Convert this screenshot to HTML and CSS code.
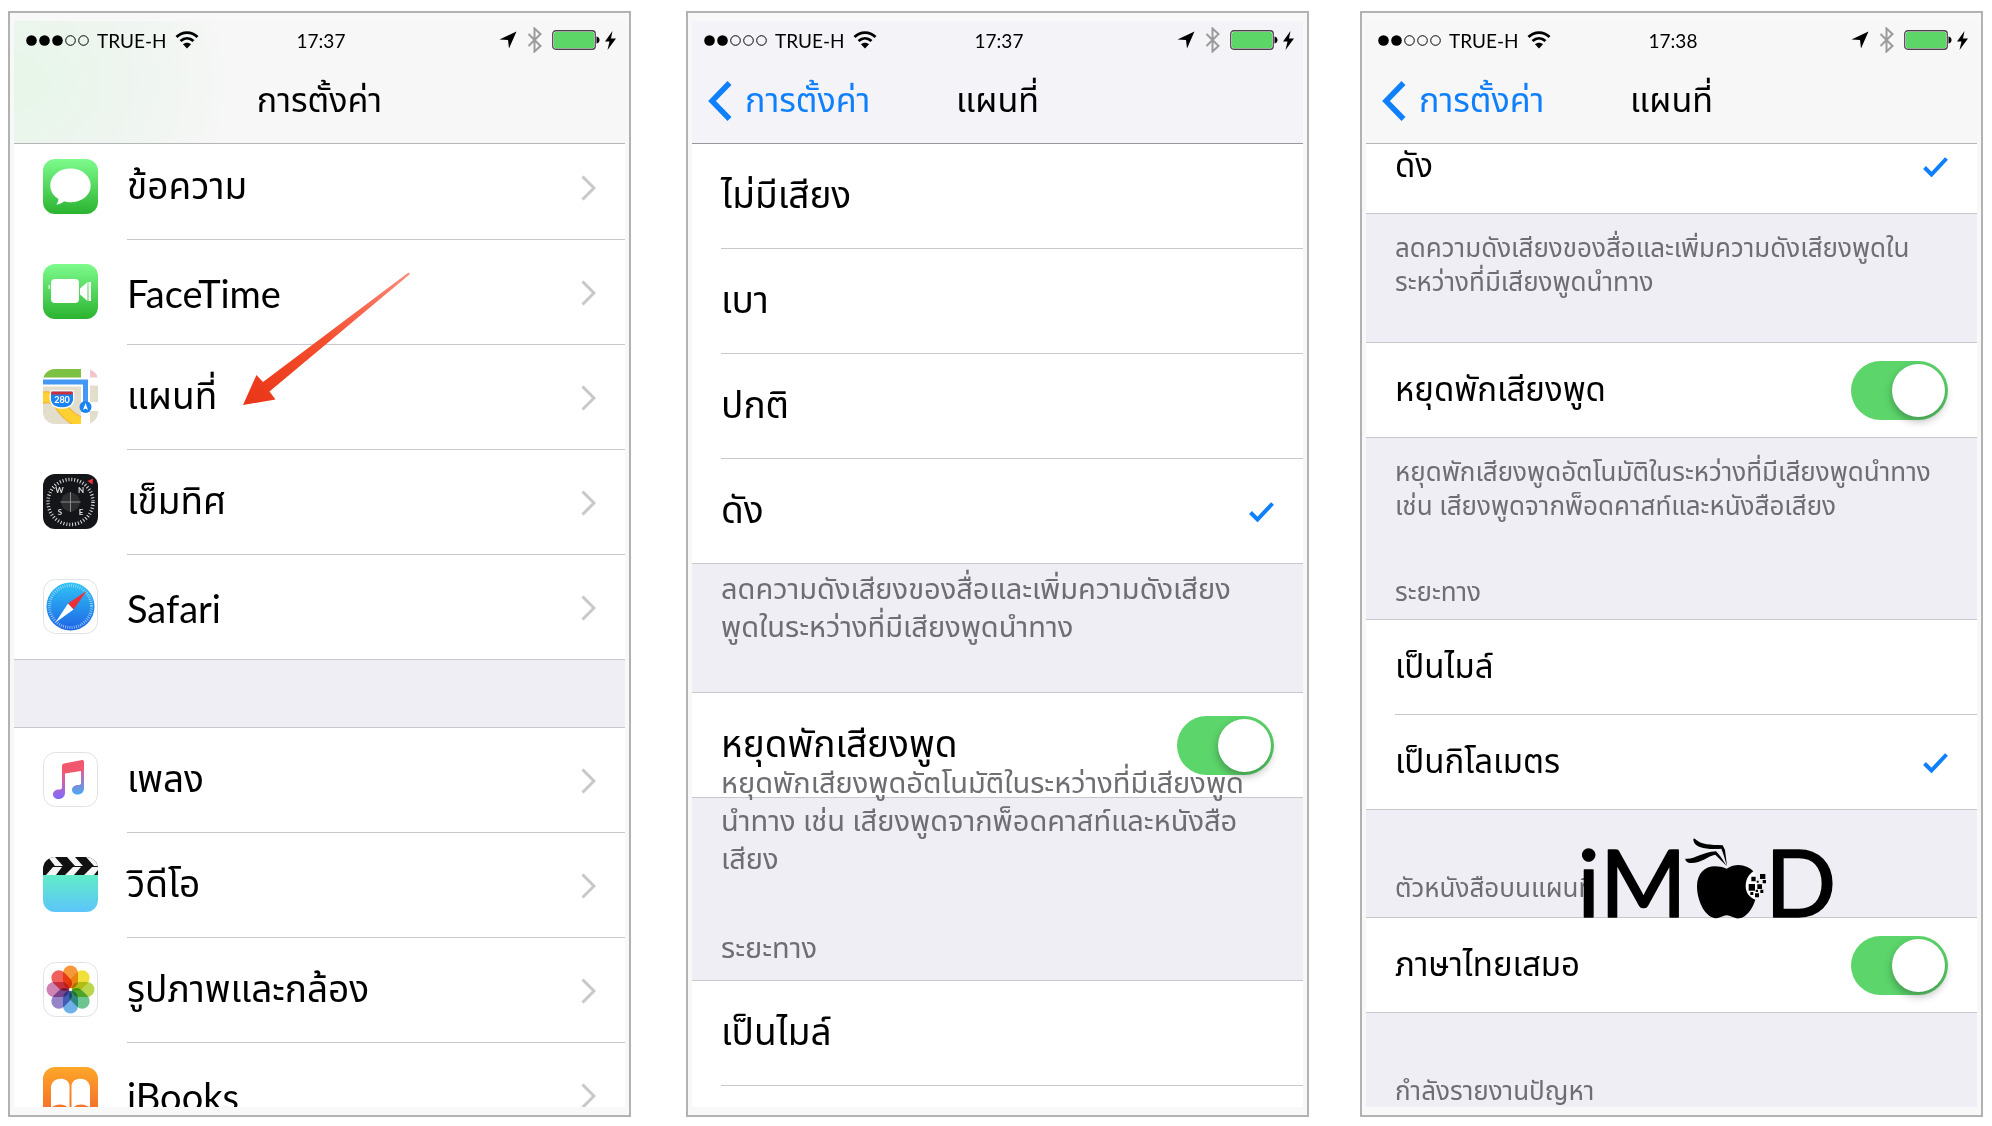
FILE: index.html
```html
<!DOCTYPE html>
<html lang="th">
<head>
    <meta charset="UTF-8">
    <meta name="viewport" content="width=device-width, initial-scale=1.0">
    <title>การตั้งค่า - แผนที่</title>
    <link rel="stylesheet" href="styles.css">
</head>
<body>
    <!-- shared symbols and gradients -->
    <svg class="defs" aria-hidden="true">
        <defs>
            <linearGradient id="green" x1="0" y1="0" x2="0" y2="1"><stop offset="0" stop-color="#7dfb8c"/><stop offset="1" stop-color="#2bb330"/></linearGradient>
            <linearGradient id="blue" x1="0" y1="0" x2="0" y2="1"><stop offset="0" stop-color="#2fc4f5"/><stop offset="1" stop-color="#1e63e6"/></linearGradient>
            <linearGradient id="note" x1="0" y1="0" x2="0" y2="1"><stop offset="0" stop-color="#f4566e"/><stop offset=".35" stop-color="#e0609a"/><stop offset="1" stop-color="#7a6cff"/></linearGradient>
            <linearGradient id="note2" x1="0" y1="0" x2="0" y2="1"><stop offset="0" stop-color="#f4566e"/><stop offset=".4" stop-color="#c16cae"/><stop offset="1" stop-color="#43aaf8"/></linearGradient>
            <linearGradient id="video" x1="0" y1="0" x2="0" y2="1"><stop offset="0" stop-color="#62ecc8"/><stop offset="1" stop-color="#5cc5fa"/></linearGradient>
            <linearGradient id="orange" x1="0" y1="0" x2="0" y2="1"><stop offset="0" stop-color="#fda729"/><stop offset="1" stop-color="#f4602a"/></linearGradient>
            <linearGradient id="red" x1="1" y1="0" x2="0" y2="1"><stop offset="0" stop-color="#fb8a7c"/><stop offset=".5" stop-color="#f3502f"/><stop offset="1" stop-color="#ea3517"/></linearGradient>
            <clipPath id="tile"><rect width="55" height="55" rx="12"/></clipPath>
        </defs>
        <symbol id="dot-on" viewBox="0 0 11 11"><circle cx="5.5" cy="5.5" r="5.3"/></symbol>
        <symbol id="dot-off" viewBox="0 0 11 11"><circle cx="5.5" cy="5.5" r="4.8" fill="none" stroke="#000"/></symbol>
        <symbol id="wifi" viewBox="0 0 24 18">
            <path d="M1.5 6C7.5 .2 16.5 .2 22.5 6M5.5 10c4-3.6 9-3.6 13 0" fill="none" stroke="#000" stroke-width="2.8"/>
            <path d="M12 17.5l-4-4.3c2.4-2 5.6-2 8 0z"/>
        </symbol>
        <symbol id="location" viewBox="0 0 18 18"><path d="M17.5 .5L10 17.5 9 9 .5 8.5z"/></symbol>
        <symbol id="bluetooth" viewBox="0 0 15 26"><path d="M1.5 7l12 12-6 5.500v-23l6 5.5-12 12" fill="none" stroke="#9b9b9b" stroke-width="2"/></symbol>
        <symbol id="battery" viewBox="0 0 48 20">
            <rect x=".75" y=".75" width="42.5" height="18.5" rx="3" fill="#fff" stroke="#444" stroke-width="1.3"/>
            <rect x="2" y="2" width="40" height="16" rx="1.5" fill="#5cd667"/>
            <path d="M44.500 6.500c4 .5 4 6.500 0 7z"/>
        </symbol>
        <symbol id="bolt" viewBox="0 0 11 19"><path d="M7.5 0L0 10.5h4.5L2.5 19 11 7.5H6z"/></symbol>
        <symbol id="chevron" viewBox="0 0 15 26"><path d="M1.5 1.5L13 13 1.5 24.5" fill="none" stroke="#c7c7cc" stroke-width="3"/></symbol>
        <symbol id="back" viewBox="0 0 24 40"><path d="M21.5 2L4 20l17.5 18" fill="none" stroke="#0f7ffb" stroke-width="5.5"/></symbol>
        <symbol id="check" viewBox="0 0 25 20"><path d="M1.5 10.5l7 7L23.5 1.5" fill="none" stroke="#0f7ffb" stroke-width="4"/></symbol>
    </svg>

    <main class="phones">
        <section class="phone phone-settings">
            <div class="screen">
                <header class="header">
                    <div class="status">
                        <div class="carrier">
                            <span class="dots"><svg><use href="#dot-on"/></svg><svg><use href="#dot-on"/></svg><svg><use href="#dot-on"/></svg><svg><use href="#dot-off"/></svg><svg><use href="#dot-off"/></svg></span>
                            <span>TRUE-H</span>
                            <svg class="wifi"><use href="#wifi"/></svg>
                        </div>
                        <time>17:37</time>
                        <div class="power">
                            <svg class="location"><use href="#location"/></svg>
                            <svg class="bluetooth"><use href="#bluetooth"/></svg>
                            <svg class="battery"><use href="#battery"/></svg>
                            <svg class="bolt"><use href="#bolt"/></svg>
                        </div>
                    </div>
                    <div class="nav"><h1>การตั้งค่า</h1></div>
                </header>

                <nav class="group">
                    <a class="row" href="#messages">
                        <svg class="icon" viewBox="0 0 55 55">
                            <rect width="55" height="55" rx="12" fill="url(#green)"/>
                            <path d="M27.5 9.5C16 9.5 7.3 17 7.3 26.5c0 6 3.3 10.5 8.2 13.5-.2 2-1 4-2.3 5.5 3.5-.2 5.6-1.3 7.5-3 2 .6 4.5.8 6.8.8C39 43.3 47.7 36 47.7 26.5S39 9.5 27.5 9.5z" fill="#fff"/>
                        </svg>
                        <span class="label">ข้อความ</span>
                        <svg class="chevron"><use href="#chevron"/></svg>
                    </a>
                    <a class="row" href="#facetime">
                        <svg class="icon" viewBox="0 0 55 55">
                            <rect width="55" height="55" rx="12" fill="url(#green)"/>
                            <rect x="8" y="15" width="28" height="24" rx="4" fill="#fff"/>
                            <path d="M37 27.5v-3L44.5 18v19L37 30.5z M45.5 18h2.5v19h-2.5z" fill="#fff"/>
                            <rect x="5.5" y="21" width="1.5" height="4" fill="#d6f7d6"/>
                        </svg>
                        <span class="label latin">FaceTime</span>
                        <svg class="chevron"><use href="#chevron"/></svg>
                    </a>
                    <a class="row" href="#maps">
                        <svg class="icon" viewBox="0 0 55 55">
                            <g clip-path="url(#tile)">
                                <rect width="55" height="55" fill="#e3ddcb"/>
                                <rect width="38" height="9" fill="#7cc142"/>
                                <rect y="8.5" width="45" height="9" fill="#fff"/>
                                <path d="M-2 29C10 26 14 31 20 40c6 8 12 11 22 16" fill="none" stroke="#f2ab35" stroke-width="12"/>
                                <path d="M-2 29C10 26 14 31 20 40c6 8 12 11 22 16" fill="none" stroke="#fdd131" stroke-width="10"/>
                                <rect x="38" width="9" height="55" fill="#fff"/>
                                <rect x="47" width="8" height="8.5" fill="#f6c4cf"/>
                                <rect x="47" y="8.5" width="8" height="8" fill="#fff"/>
                                <rect x="45" y="33" width="10" height="9" fill="#fff"/>
                                <path d="M46 56l9-5v5z" fill="#fdd131"/>
                                <path d="M0 13h42.5v25" fill="none" stroke="#4498f4" stroke-width="5"/>
                                <path d="M8 22h22c2 9 1 17-11 17S6 31 8 22z" fill="#1a83f2" stroke="#fff" stroke-width="1.3"/>
                                <path d="M8.5 22.500h21l.5 3H8z" fill="#c9303c"/>
                                <text x="19" y="34" class="icon-text" font-size="9" text-anchor="middle" fill="#fff">280</text>
                                <circle cx="42.5" cy="38" r="6" fill="#1a83f2"/>
                                <path d="M42.5 34l2.5 7-2.5-1.5L40 41z" fill="#fff"/>
                            </g>
                        </svg>
                        <span class="label">แผนที่</span>
                        <svg class="chevron"><use href="#chevron"/></svg>
                        <svg class="arrow" viewBox="0 0 170 136" aria-hidden="true">
                            <path d="M1 134L14.5 104l6.500 7L166.5 1.5 168 3 27.5 120.5l6 8z" fill="url(#red)"/>
                        </svg>
                    </a>
                    <a class="row" href="#compass">
                        <svg class="icon" viewBox="0 0 55 55">
                            <rect width="55" height="55" rx="12" fill="#141518"/>
                            <circle cx="27.5" cy="28" r="22.5" fill="none" stroke="#ddd" stroke-width="3.5" stroke-dasharray="1 1.95"/>
                            <circle cx="27.5" cy="28" r="9.5" fill="#2d2e30"/>
                            <path d="M27.5 18v20M17.5 28h20" stroke="#8b8b8b"/>
                            <path d="M50 4.5l-.5 6-5-3.5z" fill="#f0323c"/>
                            <g class="icon-text" font-size="8" fill="#ddd" text-anchor="middle"><text x="16.5" y="19">W</text><text x="38" y="19">N</text><text x="17" y="41">S</text><text x="38" y="41">E</text></g>
                        </svg>
                        <span class="label">เข็มทิศ</span>
                        <svg class="chevron"><use href="#chevron"/></svg>
                    </a>
                    <a class="row" href="#safari">
                        <svg class="icon" viewBox="0 0 55 55">
                            <rect x=".5" y=".5" width="54" height="54" rx="12" fill="#fff" stroke="#dfe3e6"/>
                            <circle cx="27.5" cy="27.5" r="24" fill="url(#blue)"/>
                            <circle cx="27.5" cy="27.5" r="21" fill="none" stroke="#a9dcfb" stroke-width="3" stroke-dasharray=".7 1.5"/>
                            <path d="M43.5 12L25 24.5l5.5 6z" fill="#ec2f38"/>
                            <path d="M12.5 43.5L25 24.5l5.5 6z" fill="#fff"/>
                        </svg>
                        <span class="label latin">Safari</span>
                        <svg class="chevron"><use href="#chevron"/></svg>
                    </a>
                </nav>

                <nav class="group">
                    <a class="row" href="#music">
                        <svg class="icon" viewBox="0 0 55 55">
                            <rect x=".5" y=".5" width="54" height="54" rx="12" fill="#fff" stroke="#e2e2e4"/>
                            <path d="M19 13v27.500c0 8-9 7.500-9 2 0-4.500 4.500-5 8.500-5.500H22V20z" fill="none"/>
                            <path d="M19 13h3v27.5c0 4-2.500 6.500-6.500 6.500-3 0-5.500-2-5.500-4.500 0-3.500 3-5 6-5 1.800 0 3-.5 3-2z" fill="url(#note)"/>
                            <path d="M38 9h3v27c0 4-2.500 6.500-6.500 6.500-3 0-5.500-2-5.500-4.500 0-3.500 3-5 6-5 1.800 0 3-.5 3-2z" fill="url(#note2)"/>
                            <path d="M19 14q0-2 2-2.400l18-3.600q2-.3 2 1.500v9L19 22z" fill="#f15870"/>
                        </svg>
                        <span class="label">เพลง</span>
                        <svg class="chevron"><use href="#chevron"/></svg>
                    </a>
                    <a class="row" href="#videos">
                        <svg class="icon" viewBox="0 0 55 55">
                            <g clip-path="url(#tile)">
                                <rect width="55" height="18" fill="#111"/>
                                <path d="M0 0h5L0 7zM5 0h7l8 9h-8zM24 0h8l8 9h-8zM43 0h12v9h-4zM3 18l7-8h9l-6 8zM22 18l8-8h8l-7 8zM41 18l8-8h6v3l-4 5z" fill="#f5f5f5"/>
                                <rect y="18" width="55" height="37" fill="url(#video)"/>
                            </g>
                        </svg>
                        <span class="label">วิดีโอ</span>
                        <svg class="chevron"><use href="#chevron"/></svg>
                    </a>
                    <a class="row" href="#photos">
                        <svg class="icon" viewBox="0 0 55 55">
                            <rect x=".5" y=".5" width="54" height="54" rx="12" fill="#fff" stroke="#e2e2e4"/>
                            <g class="petals">
                                <rect x="20" y="3.5" width="15" height="23" rx="7.5" fill="#f7983a"/>
                                <rect x="20" y="3.5" width="15" height="23" rx="7.5" fill="#f1e03a" transform="rotate(45 27.5 27.5)"/>
                                <rect x="20" y="3.5" width="15" height="23" rx="7.5" fill="#b9d64c" transform="rotate(90 27.5 27.5)"/>
                                <rect x="20" y="3.5" width="15" height="23" rx="7.5" fill="#6cc48f" transform="rotate(135 27.5 27.5)"/>
                                <rect x="20" y="3.5" width="15" height="23" rx="7.5" fill="#6fb0e6" transform="rotate(180 27.5 27.5)"/>
                                <rect x="20" y="3.5" width="15" height="23" rx="7.5" fill="#9485c8" transform="rotate(225 27.5 27.5)"/>
                                <rect x="20" y="3.5" width="15" height="23" rx="7.5" fill="#cf82b4" transform="rotate(270 27.5 27.5)"/>
                                <rect x="20" y="3.5" width="15" height="23" rx="7.5" fill="#f0605a" transform="rotate(315 27.5 27.5)"/>
                            </g>
                            <circle cx="27.5" cy="27.5" r="1.5" fill="#fff"/>
                        </svg>
                        <span class="label">รูปภาพและกล้อง</span>
                        <svg class="chevron"><use href="#chevron"/></svg>
                    </a>
                    <a class="row" href="#ibooks">
                        <svg class="icon" viewBox="0 0 55 55">
                            <rect width="55" height="55" rx="12" fill="url(#orange)"/>
                            <path d="M8 21c0-12 18-12 18.500-2v24c-3-7-14-7-18.500-2zM47 21c0-12-18-12-18.500-2v24c3-7 14-7 18.500-2z" fill="#fff"/>
                        </svg>
                        <span class="label latin">iBooks</span>
                        <svg class="chevron"><use href="#chevron"/></svg>
                    </a>
                </nav>
            </div>
        </section>

        <section class="phone phone-maps">
            <div class="screen">
                <header class="header">
                    <div class="status">
                        <div class="carrier">
                            <span class="dots"><svg><use href="#dot-on"/></svg><svg><use href="#dot-on"/></svg><svg><use href="#dot-off"/></svg><svg><use href="#dot-off"/></svg><svg><use href="#dot-off"/></svg></span>
                            <span>TRUE-H</span>
                            <svg class="wifi"><use href="#wifi"/></svg>
                        </div>
                        <time>17:37</time>
                        <div class="power">
                            <svg class="location"><use href="#location"/></svg>
                            <svg class="bluetooth"><use href="#bluetooth"/></svg>
                            <svg class="battery"><use href="#battery"/></svg>
                            <svg class="bolt"><use href="#bolt"/></svg>
                        </div>
                    </div>
                    <div class="nav">
                        <a class="back" href="#settings"><svg><use href="#back"/></svg>การตั้งค่า</a>
                        <h1>แผนที่</h1>
                    </div>
                </header>

                <div class="group">
                    <label class="row"><input type="radio" name="volume"><span class="label">ไม่มีเสียง</span><svg class="check"><use href="#check"/></svg></label>
                    <label class="row"><input type="radio" name="volume"><span class="label">เบา</span><svg class="check"><use href="#check"/></svg></label>
                    <label class="row"><input type="radio" name="volume"><span class="label">ปกติ</span><svg class="check"><use href="#check"/></svg></label>
                    <label class="row"><input type="radio" name="volume" checked><span class="label">ดัง</span><svg class="check"><use href="#check"/></svg></label>
                </div>
                <p class="note">ลดความดังเสียงของสื่อและเพิ่มความดังเสียง<br>พูดในระหว่างที่มีเสียงพูดนำทาง</p>
                <div class="group">
                    <label class="row"><span class="label">หยุดพักเสียงพูด</span><input class="switch" type="checkbox" checked></label>
                </div>
                <p class="note note-pause">หยุดพักเสียงพูดอัตโนมัติในระหว่างที่มีเสียงพูด<br>นำทาง เช่น เสียงพูดจากพ็อดคาสท์และหนังสือ<br>เสียง</p>
                <h2>ระยะทาง</h2>
                <div class="group">
                    <label class="row"><input type="radio" name="unit"><span class="label">เป็นไมล์</span><svg class="check"><use href="#check"/></svg></label>
                </div>
            </div>
        </section>

        <section class="phone phone-compact">
            <div class="screen">
                <header class="header">
                    <div class="status">
                        <div class="carrier">
                            <span class="dots"><svg><use href="#dot-on"/></svg><svg><use href="#dot-on"/></svg><svg><use href="#dot-off"/></svg><svg><use href="#dot-off"/></svg><svg><use href="#dot-off"/></svg></span>
                            <span>TRUE-H</span>
                            <svg class="wifi"><use href="#wifi"/></svg>
                        </div>
                        <time>17:38</time>
                        <div class="power">
                            <svg class="location"><use href="#location"/></svg>
                            <svg class="bluetooth"><use href="#bluetooth"/></svg>
                            <svg class="battery"><use href="#battery"/></svg>
                            <svg class="bolt"><use href="#bolt"/></svg>
                        </div>
                    </div>
                    <div class="nav">
                        <a class="back" href="#settings"><svg><use href="#back"/></svg>การตั้งค่า</a>
                        <h1>แผนที่</h1>
                    </div>
                </header>

                <div class="group">
                    <label class="row"><input type="radio" name="volume2" checked><span class="label">ดัง</span><svg class="check"><use href="#check"/></svg></label>
                </div>
                <p class="note">ลดความดังเสียงของสื่อและเพิ่มความดังเสียงพูดใน<br>ระหว่างที่มีเสียงพูดนำทาง</p>
                <div class="group">
                    <label class="row"><span class="label">หยุดพักเสียงพูด</span><input class="switch" type="checkbox" checked></label>
                </div>
                <p class="note">หยุดพักเสียงพูดอัตโนมัติในระหว่างที่มีเสียงพูดนำทาง<br>เช่น เสียงพูดจากพ็อดคาสท์และหนังสือเสียง</p>
                <h2>ระยะทาง</h2>
                <div class="group">
                    <label class="row"><input type="radio" name="unit2"><span class="label">เป็นไมล์</span><svg class="check"><use href="#check"/></svg></label>
                    <label class="row"><input type="radio" name="unit2" checked><span class="label">เป็นกิโลเมตร</span><svg class="check"><use href="#check"/></svg></label>
                </div>
                <div class="map-labels">
                    <h2>ตัวหนังสือบนแผนที่</h2>
                    <svg class="imod" viewBox="36 24 756 276">
                        <g class="imod-text"><text x="56" y="262">i</text><text x="220" y="262">M</text><text x="692" y="262">D</text></g>
                        <path d="M552 128c-16 8-24 22-24 40s9 32 26 40q10-10 8-40t-10-40z" fill="#fff"/>
                        <path d="M470 116c30-18 60-12 80 8-14 10-23 24-23 44 0 20 11 34 29 41-8 26-26 53-48 56-16 2-26-9-38-9s-22 11-38 8c-30-8-51-54-51-96 1-50 39-72 89-52z"/>
                        <path d="M370 27c2-4 6 0 10 4 14 12 40 14 78 15l7 14 6 48c-6-18-9-34-17-52-30 3-84 2-84-29z"/>
                        <path d="M346 86c26 4 49-20 92-22 12 12 22 28 32 44l-34-34c-24 4-44 28-78 25-8-3-12-7-12-13z"/>
                        <path d="M544 140h13v14h-13zM570 132h16v15h-16zM536 162h19v20h-19zM562 163h14v14h-14zM578 150h10v10h-10zM560 152h6v6h-6zM541 186h9v9h-9zM557 179h7v7h-7zM571 179h9v10h-9zM555 190h12v12h-12z"/>
                    </svg>
                </div>
                <div class="group">
                    <label class="row"><span class="label">ภาษาไทยเสมอ</span><input class="switch" type="checkbox" checked></label>
                </div>
                <h2>กำลังรายงานปัญหา</h2>
            </div>
        </section>
    </main>
</body>
</html>
```

FILE: styles.css
```css
* {
    box-sizing: border-box;
}
body {
    margin: 0;
    background: #fff;
    font-family: Lato, "Noto Sans Thai", "Noto Sans", sans-serif;
    color: #000;
}
.defs {
    position: absolute;
    width: 0;
    height: 0;
}
.phones {
    display: grid;
    grid-template-columns: repeat(3, 1fr);
    gap: 53px;
    height: 100vh;
    padding: 11px 9px 9px 8px;
}
.phone {
    --row: 105px;
    --label: 37px;
    --note: 29px;
    --line: 38px;
    --bar: #f7f7f7;
    min-height: 0;
    padding: 8px 4px;
    border: 2px solid #b2b2b2;
    background: #f8f8f8;
}
.screen {
    height: 100%;
    overflow: hidden;
    background: #efeef4;
}

/* status bar and title */
.header {
    position: relative;
    z-index: 3;
    height: 123px;
    background: var(--bar);
    border-bottom: 1px solid #b6b6b9;
}
.status {
    display: grid;
    grid-template-columns: 1fr auto 1fr;
    align-items: center;
    height: 38px;
    padding: 0 9px 0 12px;
    font-size: 19px;
}
.carrier, .power, .dots {
    display: flex;
    align-items: center;
}
.carrier {
    gap: 8px;
}
.dots {
    gap: 2px;
}
.dots svg {
    width: 11px;
    height: 11px;
}
.wifi {
    width: 24px;
    height: 18px;
}
.power {
    justify-content: flex-end;
    gap: 10px;
}
.location {
    width: 18px;
    height: 18px;
}
.bluetooth {
    width: 15px;
    height: 26px;
}
.battery {
    width: 48px;
    height: 20px;
}
.bolt {
    width: 11px;
    height: 19px;
    margin-left: -5px;
}
.nav {
    display: grid;
    grid-template-columns: 1fr auto 1fr;
    align-items: center;
    height: 84px;
    padding: 0 16px;
}
.nav h1 {
    grid-column: 2;
    margin: 0;
    font-size: 34px;
    font-weight: 400;
}
.back {
    display: flex;
    align-items: center;
    gap: 13px;
    font-size: 34px;
    color: #0f7ffb;
    text-decoration: none;
}
.back svg {
    width: 24px;
    height: 40px;
}

/* list groups */
.group {
    border-top: 1px solid #c8c7cc;
    background: #fff;
}
.row {
    position: relative;
    display: flex;
    align-items: center;
    height: var(--row);
    padding: 0 29px;
    color: #000;
    text-decoration: none;
}
.row::after {
    content: "";
    position: absolute;
    left: 29px;
    right: 0;
    bottom: 0;
    border-bottom: 1px solid #c8c7cc;
}
.row:last-child::after {
    left: 0;
}
.label {
    flex: 1;
    font-size: var(--label);
    white-space: nowrap;
}
.latin {
    font-size: 38px;
}
.icon {
    width: 55px;
    height: 55px;
    margin: 0 29px 3px 0;
}
.icon-text {
    font-family: Lato, sans-serif;
    font-weight: 700;
}
.petals rect {
    mix-blend-mode: multiply;
}
.chevron {
    width: 15px;
    height: 26px;
}
.row input[type="radio"] {
    position: absolute;
    opacity: 0;
}
.check {
    width: 25px;
    height: 20px;
    visibility: hidden;
}
input:checked ~ .check {
    visibility: visible;
}
.switch {
    appearance: none;
    position: relative;
    z-index: 2;
    width: 97px;
    height: 59px;
    margin: 0;
    padding: 3px;
    border-radius: 30px;
    background: #e5e5ea;
}
.switch::before {
    content: "";
    display: block;
    width: 53px;
    height: 53px;
    border-radius: 50%;
    background: #fff;
    box-shadow: 0 4px 8px rgba(0,0,0,0.3);
}
.switch:checked {
    background: #5cd56b;
}
.switch:checked::before {
    margin-left: auto;
}

/* grey captions between groups */
.note, h2 {
    position: relative;
    margin: 0;
    padding: 5px 29px 47px;
    font-size: var(--note);
    font-weight: 400;
    line-height: var(--line);
    color: #6d6d72;
    white-space: nowrap;
}

.phone-settings {
    --bar: radial-gradient(ellipse 230px 190px at 0 50%, #e6f6e8, #eff5f0 55%, #f7f7f7);
}
.phone-settings .group {
    margin-bottom: 67px;
}
.phone-settings .header + .group {
    margin-top: -10px;
}
.phone-settings .row:not(:last-child)::after {
    left: 113px;
}
.arrow {
    position: absolute;
    z-index: 2;
    left: 228px;
    top: -74px;
    width: 170px;
    height: 136px;
}

.phone-maps {
    --bar: #f4f4f8;
    margin: 0 -2px 0 2px;
}
.phone-maps .header {
    border-color: #98989c;
}
.phone-maps .header + .group {
    margin-top: -1px;
}
.phone-maps .note-pause {
    margin-top: -35px;
    padding: 0 29px;
}
.phone-maps h2 {
    padding: 51px 29px 14px;
}
.phone-maps h2 + .group .row::after {
    left: 29px;
}
.phone-maps h2 + .group {
    padding-bottom: 29px;
}

.phone-compact {
    --row: 95px;
    --label: 33px;
    --note: 26px;
    --line: 34px;
}
.phone-compact .header + .group {
    margin-top: -26px;
}
.phone-compact .note {
    padding: 16px 29px 44px;
}
.phone-compact h2 {
    padding: 60px 29px 13px;
}
.phone-compact .note + h2 {
    padding: 8px 29px 11px;
}
.map-labels {
    position: relative;
}
.imod {
    position: absolute;
    z-index: 2;
    left: 216px;
    top: 28px;
    width: 252px;
    height: 92px;
}
.imod-text {
    font-family: Lato, sans-serif;
    font-size: 280px;
    text-anchor: middle;
    stroke: #000;
    stroke-width: 5px;
    stroke-linejoin: round;
}
```
